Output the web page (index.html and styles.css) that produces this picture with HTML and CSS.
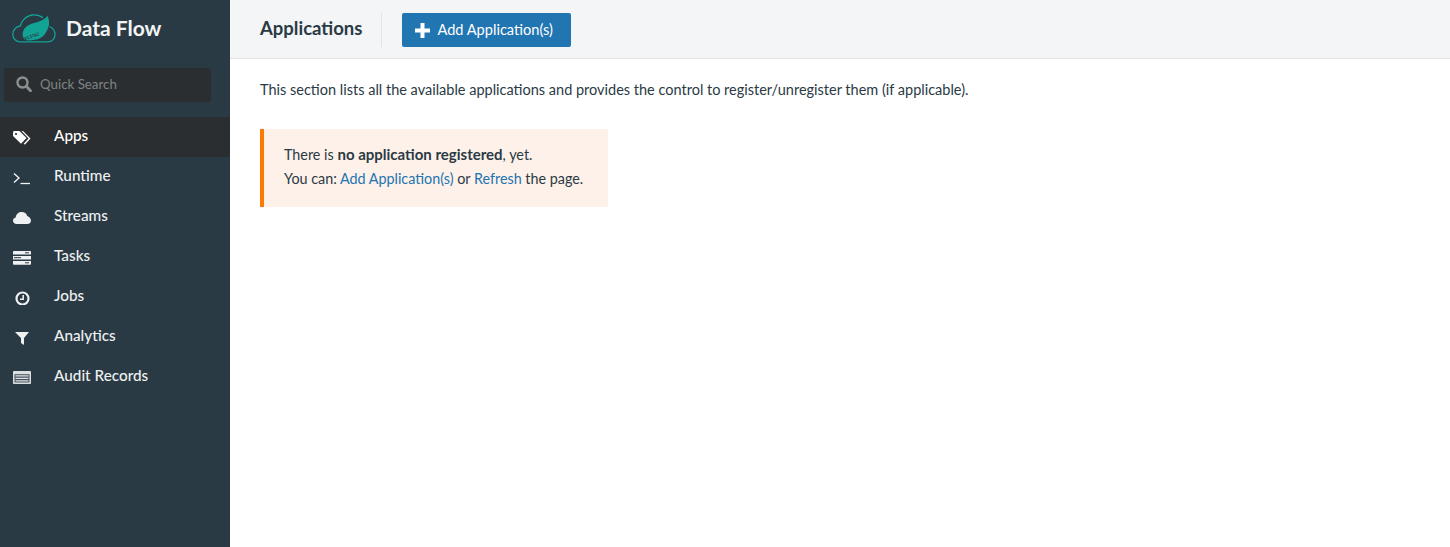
FILE: index.html
```html
<!DOCTYPE html>
<html lang="en">
<head>
<meta charset="utf-8">
<title>Data Flow</title>
<link rel="stylesheet" href="styles.css">
</head>
<body>
<div class="app">
  <aside class="sidebar">
    <div class="brand">
      <svg class="logo" viewBox="0 0 44 30" width="44" height="30">
        <path d="M11 27.800H8.500C4 27.800 .8 24.800 .8 20.500C.8 16 4 12.500 8.200 12C9.800 6 15 1 21.500 .8C25.500 .7 28.500 1.800 31 3.800M37.500 12.500C41 14 43 17 43 20.500C43 24.800 40 27.800 35.500 27.800H11" fill="none" stroke="#12a394" stroke-width="1.300"/>
        <path d="M10.700 19.300C11.500 14 15 11 22 9C28 7.300 33 5.500 35.700 1.700C37.500 7 37.500 11 36 14.300C34 19.500 31 23 28 24.300C23 26.500 17 26.800 13 26C11.500 24.500 10.500 22 10.700 19.300Z" fill="#12a394"/>
        <text class="logo-digits" x="13" y="26.300" transform="rotate(-19 13 26.300)">013702</text>
      </svg>
      <span class="brand-name">Data Flow</span>
    </div>
    <div class="search">
      <svg class="search-icon" viewBox="0 0 16 16" width="16" height="16">
        <circle cx="6.500" cy="6.500" r="5" fill="none" stroke="#8b8f90" stroke-width="2.400"/>
        <path d="M10.300 10.300L14.500 14.800" stroke="#8b8f90" stroke-width="2.800" stroke-linecap="round"/>
      </svg>
      <span class="search-text">Quick Search</span>
    </div>
    <nav class="nav">
      <a class="nav-item active">
        <span class="nav-icon">
          <svg viewBox="0 0 18 14" width="18" height="14"><path d="M0 1.500C0 .6.600 0 1.500 0H6.500L13.500 7L8 12.800L.6 5.600C.2 5.200 0 4.800 0 4.200Z" fill="#fff"/><path d="M8.500 0H10L17.500 7.600L12 13.500L10.500 13L15.500 7.500Z" fill="#fff"/><circle cx="3" cy="3" r="1.100" fill="#2a2e30"/></svg>
        </span>
        <span class="nav-label">Apps</span>
      </a>
      <a class="nav-item">
        <span class="nav-icon">
          <svg viewBox="0 0 18 14" width="18" height="14"><path d="M1 2.500L6 7L1 11.500" fill="none" stroke="#eef0f1" stroke-width="1.400"/><path d="M7.500 12.500H17" stroke="#eef0f1" stroke-width="1.300"/></svg>
        </span>
        <span class="nav-label">Runtime</span>
      </a>
      <a class="nav-item">
        <span class="nav-icon">
          <svg viewBox="0 0 18 14" width="18" height="14"><path d="M3.500 13C1.500 13 0 11.600 0 9.800C0 8.200 1.100 6.900 2.700 6.600C3 3 5.700 1 8.800 1C11.500 1 13.500 2.600 14.200 5C16.500 5.800 18 7.700 18 9.800C18 11.600 16.500 13 14.500 13Z" fill="#eef0f1"/></svg>
        </span>
        <span class="nav-label">Streams</span>
      </a>
      <a class="nav-item">
        <span class="nav-icon">
          <svg viewBox="0 0 18 14" width="18" height="14"><path d="M0 1C0 .4.400 0 1 0H17C17.600 0 18 .4 18 1V3.500H0ZM0 5H18V8.500H0ZM0 10H18V12.800C18 13.400 17.600 13.800 17 13.800H1C.4 13.800 0 13.400 0 12.800Z" fill="#eef0f1"/><path d="M12 1.800H16M1 6.700H8M12 11.800H16" stroke="#2a3a45" stroke-width="1"/></svg>
        </span>
        <span class="nav-label">Tasks</span>
      </a>
      <a class="nav-item">
        <span class="nav-icon">
          <svg viewBox="0 0 18 14" width="18" height="14"><circle cx="9.500" cy="7.500" r="6" fill="none" stroke="#eef0f1" stroke-width="2.200"/><path d="M10.200 4V8.200H7" fill="none" stroke="#eef0f1" stroke-width="1.500"/></svg>
        </span>
        <span class="nav-label">Jobs</span>
      </a>
      <a class="nav-item">
        <span class="nav-icon">
          <svg viewBox="0 0 18 14" width="18" height="14"><path d="M2 1H16L11 7V14L8 12V7Z" fill="#eef0f1"/></svg>
        </span>
        <span class="nav-label">Analytics</span>
      </a>
      <a class="nav-item">
        <span class="nav-icon">
          <svg viewBox="0 0 18 14" width="18" height="14"><path d="M1 0H17C17.500 0 18 .5 18 1V12C18 12.500 17.500 13 17 13H1C.5 13 0 12.500 0 12V1C0 .5.500 0 1 0Z" fill="#dde0e1"/><path d="M1.500 3.200H16.500V11.500H1.500Z" fill="#46545e"/><path d="M2.500 4.800H15.500M2.500 7.300H15.500M2.500 9.800H15.500" stroke="#dde0e1" stroke-width="1.200"/></svg>
        </span>
        <span class="nav-label">Audit Records</span>
      </a>
    </nav>
  </aside>
  <main class="main">
    <header class="page-header">
      <h1 class="page-title">Applications</h1>
      <button class="add-button" type="button">
        <svg class="plus" viewBox="0 0 15 15" width="15" height="15"><path d="M5.500 0H9.500V5.500H15V9.500H9.500V15H5.500V9.500H0V5.500H5.500Z" fill="#fff"/></svg>
        <span class="add-label">Add Application(s)</span>
      </button>
    </header>
    <section class="content">
      <p class="intro">This section lists all the available applications and provides the control to register/unregister them (if applicable).</p>
      <div class="notice">
        <p>There is <strong>no application registered</strong>, yet.</p>
        <p>You can: <a class="link">Add Application(s)</a> or <a class="link">Refresh</a> the page.</p>
      </div>
    </section>
  </main>
</div>
</body>
</html>
```

FILE: styles.css
```css
* { box-sizing: border-box; }
html, body { margin: 0; height: 100%; }
body {
  font-family: "Lato", "Noto Sans", sans-serif;
  font-size: 14px;
  color: #2a3a45;
  background: #fff;
  overflow: hidden;
}
.app { display: flex; height: 547px; }
.sidebar {
  width: 230px;
  flex: none;
  background: #2a3a45;
  display: flex;
  flex-direction: column;
}
.brand {
  display: flex;
  align-items: center;
  height: 58px;
  padding: 0 0 0 12px;
  gap: 10px;
}
.logo { flex: none; }
.logo-digits {
  font-family: "DejaVu Sans Mono", monospace;
  font-size: 4.300px;
  font-weight: 700;
  fill: #2a3a45;
}
.brand-name {
  font-size: 21px;
  font-weight: 700;
  color: #f2f4f5;
  padding-bottom: 4px;
}
.search {
  margin: 10px 19px 0 4px;
  height: 34px;
  background: #2a2e30;
  border-radius: 3px;
  display: flex;
  align-items: center;
  padding-left: 12px;
  gap: 8px;
}
.search-icon { flex: none; margin-bottom: 2px; }
.search-text { color: #7f8485; font-size: 13.300px; padding-bottom: 2px; }
.nav { margin-top: 15px; display: flex; flex-direction: column; }
.nav-item {
  display: flex;
  align-items: center;
  height: 40px;
  padding-left: 13px;
  color: #eef0f1;
  font-size: 15.300px;
  font-weight: 500;
}
.nav-item.active { background: #2a2e30; color: #fff; }
.nav-icon { width: 41px; flex: none; display: flex; padding-top: 2px; }
.nav-label { padding-bottom: 4px; }
.main { flex: 1; min-width: 0; }
.page-header {
  height: 59px;
  background: #f4f5f7;
  border-bottom: 1px solid #e2e4e8;
  display: flex;
  align-items: center;
  padding: 2px 0 0 30px;
}
.page-title {
  margin: 0;
  height: 34px;
  line-height: 30px;
  font-size: 18.500px;
  font-weight: 700;
  color: #2a3a45;
  padding-right: 19px;
  border-right: 1px solid #e2e4e8;
}
.add-button {
  margin-left: 20px;
  height: 34px;
  width: 169px;
  background: #2175b1;
  border: 0;
  border-radius: 2px;
  color: #fff;
  font: inherit;
  font-size: 14.600px;
  display: flex;
  align-items: center;
  padding: 0 0 0 13px;
  gap: 7px;
}
.add-label { padding-bottom: 2px; }
.content { padding: 21px 30px; }
.intro { margin: 0; line-height: 20px; font-size: 14.500px; }
.notice {
  margin-top: 29px;
  width: 348px;
  height: 78px;
  background: #fef1e9;
  border-left: 4px solid #fb7a00;
  padding: 13px 20px;
  font-size: 14.350px;
}
.notice p { margin: 0; line-height: 24px; }
.notice strong { font-size: 15px; }
.link { color: #2175b1; }
```
